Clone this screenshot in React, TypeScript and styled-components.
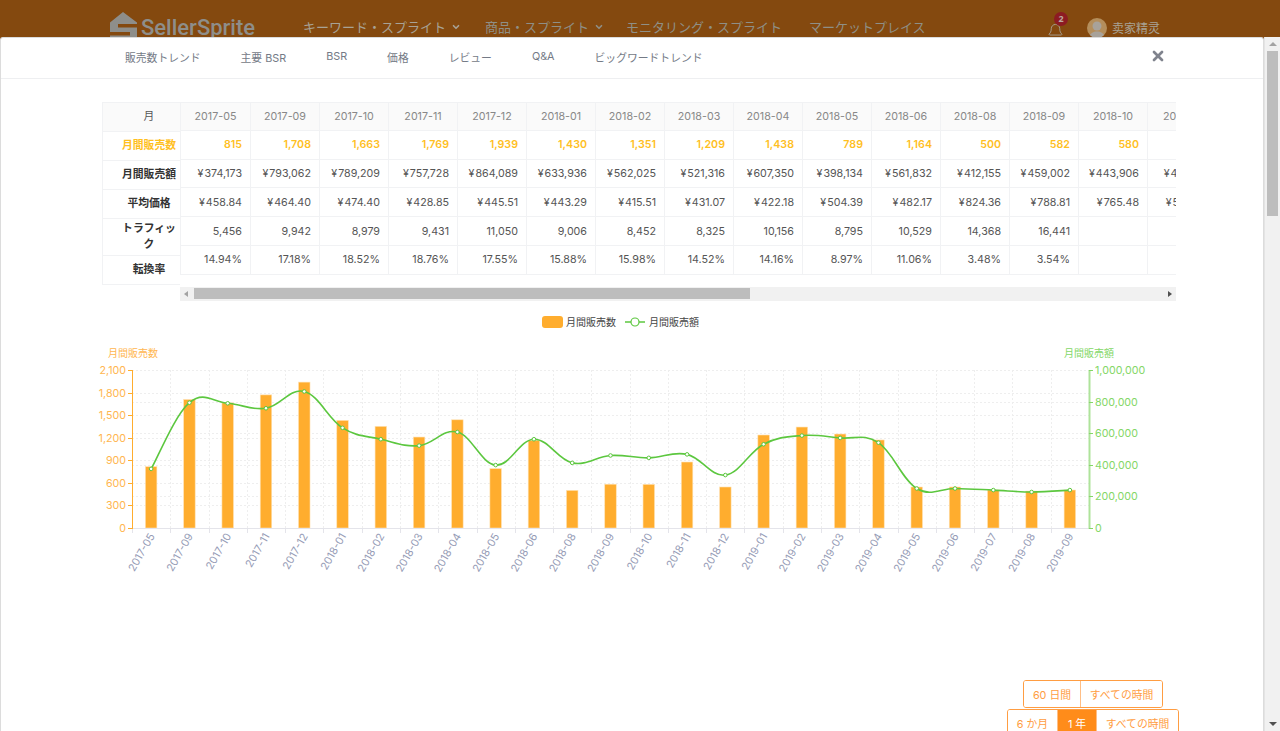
import React from "react";
import styled, { createGlobalStyle } from "styled-components";
import { Bell, ChevronDown, X } from "lucide-react";

const FONT = `Inter, "Noto Sans CJK JP", sans-serif`;

const Global = createGlobalStyle`
  html, body { margin: 0; padding: 0; height: 100%; overflow: hidden; background: #fff; }
  * { box-sizing: border-box; }
  body { font-family: ${FONT}; }
`;

const Page = styled.div`
  height: 731px;
  overflow: hidden;
  display: flex;
  flex-direction: column;
  background: #84490f;
`;
const TopBar = styled.header`
  height: 37px;
  flex: none;
  position: relative;
  overflow: hidden;
  display: flex;
  align-items: flex-start;
  padding: 12px 0 0 110px;
  color: #a8a295;
`;
const LogoText = styled.span`
  font: 500 22px/31px Roboto, sans-serif;
  color: #8e8e8a;
  margin-left: 3px;
  width: 162px;
  flex: none;
`;
const NavItem = styled.span<{ $w: number; $dim?: boolean }>`
  width: ${(p) => p.$w}px;
  flex: none;
  font-size: 13px;
  line-height: 30px;
  display: flex;
  align-items: center;
  gap: 5px;
  white-space: nowrap;
  color: ${(p) => (p.$dim ? "#8f8f86" : "#a8a295")};
`;
const Right = styled.div`
  position: relative;
  flex: none;
  margin-left: 121px;
  display: flex;
  align-items: center;
  height: 30px;
  font-size: 12px;
`;
const Badge = styled.span`
  position: absolute;
  left: 7px;
  top: 0;
  width: 14px;
  height: 14px;
  border-radius: 50%;
  background: #8d1b22;
  color: #b9a9a0;
  font: 700 9px/14px "Open Sans", sans-serif;
  text-align: center;
`;
const Avatar = styled.span`
  width: 20px;
  height: 20px;
  border-radius: 50%;
  background: #b48e5c;
  margin: 1px 5px 0 23px;
  overflow: hidden;
  display: block;
`;
const Main = styled.div`
  flex: 1;
  min-height: 0;
  display: flex;
`;
const Modal = styled.section`
  width: 1264px;
  flex: none;
  background: #fff;
  border: 1px solid #dcdcdc;
  border-bottom: none;
  border-radius: 3px 3px 0 0;
  overflow: hidden;
`;
const PageScroll = styled.div`
  flex: 1;
  background: #f1f1f1;
  border-left: 1px solid #e4e4e4;
  display: flex;
  flex-direction: column;
  align-items: center;
  padding-top: 5px;
  position: relative;
`;
const ArrowUp = styled.i`
  width: 0;
  height: 0;
  border: 4px solid transparent;
  border-top: none;
  border-bottom: 4px solid #a3a3a3;
`;
const ArrowDown = styled.i`
  position: absolute;
  bottom: 5px;
  width: 0;
  height: 0;
  border: 4px solid transparent;
  border-bottom: none;
  border-top: 4px solid #505050;
`;
const PageThumb = styled.div`
  width: 11px;
  height: 165px;
  background: #bdbdbd;
  margin-top: 5px;
`;
const Tabs = styled.nav`
  height: 41px;
  padding: 0 0 3px 124px;
  border-bottom: 1px solid #eeeff1;
  display: flex;
  align-items: center;
  gap: 40px;
  color: #747a86;
  font-size: 10.8px;
  position: relative;
`;
const Close = styled.span`
  position: absolute;
  left: 1149px;
  top: 10px;
  color: #7f838d;
  display: flex;
`;
const Content = styled.div`
  padding: 23px 0 0 101px;
  width: 1175px;
`;
const TableWrap = styled.div`
  display: flex;
  align-items: flex-start;
  height: 203px;
`;
const LeftCol = styled.div`
  width: 78px;
  flex: none;
  border: 1px solid #f1f2f4;
  border-right: none;
`;
const LeftCell = styled.div<{ $h: number; $head?: boolean; $amber?: boolean }>`
  height: ${(p) => p.$h}px;
  display: flex;
  align-items: center;
  justify-content: center;
  text-align: center;
  padding: 0 3px 0 18px;
  font-size: 10.8px;
  line-height: 16px;
  font-weight: ${(p) => (p.$head ? 400 : 700)};
  color: ${(p) => (p.$amber ? "#ffc01f" : p.$head ? "#555" : "#333")};
  background: ${(p) => (p.$head ? "#fafafa" : "#fff")};
  border-bottom: 1px solid #f1f2f4;
  &:last-child { border-bottom: none; }
`;
const Scroller = styled.div`
  flex: 1;
  min-width: 0;
  overflow: hidden;
`;
const Row = styled.div<{ $head?: boolean }>`
  display: flex;
  width: max-content;
  height: 28.8px;
  background: ${(p) => (p.$head ? "#fafafa" : "#fff")};
  border-top: ${(p) => (p.$head ? "1px solid #f1f2f4" : "none")};
  border-bottom: 1px solid #f1f2f4;
`;
const Cell = styled.div<{ $head?: boolean; $amber?: boolean; $first?: boolean }>`
  width: ${(p) => (p.$first ? 70 : 69)}px;
  flex: none;
  border-left: 1px solid #f1f2f4;
  display: flex;
  align-items: center;
  justify-content: ${(p) => (p.$head ? "center" : "flex-end")};
  padding-right: ${(p) => (p.$head ? 0 : 8)}px;
  font-size: 10.7px;
  font-weight: ${(p) => (p.$amber ? 600 : 400)};
  color: ${(p) => (p.$amber ? "#ffc01f" : p.$head ? "#888" : "#555")};
  white-space: nowrap;
`;
const HScroll = styled.div`
  height: 14px;
  margin-top: 12px;
  background: #f1f1f1;
  display: flex;
  align-items: center;
  justify-content: space-between;
  padding: 0 4px;
  position: relative;
`;
const ArrowLeft = styled.i`
  width: 0;
  height: 0;
  border: 3.5px solid transparent;
  border-left: none;
  border-right: 4px solid #a3a3a3;
`;
const ArrowRight = styled.i`
  width: 0;
  height: 0;
  border: 3.5px solid transparent;
  border-right: none;
  border-left: 4px solid #505050;
`;
const HThumb = styled.div`
  position: absolute;
  left: 14px;
  top: 1px;
  width: 556px;
  height: 11px;
  background: #bdbdbd;
`;
const ChartSvg = styled.svg`
  display: block;
  width: 1074px;
  height: 360px;
  overflow: visible;
`;
const AxisText = styled.text<{ $c: string }>`
  font-family: ${FONT};
  font-size: 10.7px;
  fill: ${(p) => p.$c};
`;
const RangeStack = styled.div`
  width: 172px;
  margin: 15px 0 0 905px;
  display: flex;
  flex-direction: column;
  align-items: center;
`;
const RangeGroup = styled.div`
  display: flex;
  height: 28px;
  margin-bottom: 1px;
  border: 1px solid #ff9d42;
  border-radius: 3px;
  overflow: hidden;
  flex: none;
`;
const RangeBtn = styled.div<{ $w: number; $on?: boolean }>`
  width: ${(p) => p.$w}px;
  display: flex;
  align-items: center;
  justify-content: center;
  font-size: 10.8px;
  color: ${(p) => (p.$on ? "#fff" : "#ff9d42")};
  background: ${(p) => (p.$on ? "#ff8c1a" : "#fff")};
  border-left: 1px solid #ffbe85;
  &:first-child { border-left: none; }
`;

const months = ["2017-05","2017-09","2017-10","2017-11","2017-12","2018-01","2018-02","2018-03","2018-04","2018-05","2018-06","2018-08","2018-09","2018-10","2018-11"];
const rows: { amber?: boolean; v: string[] }[] = [
  { amber: true, v: ["815","1,708","1,663","1,769","1,939","1,430","1,351","1,209","1,438","789","1,164","500","582","580",""] },
  { v: ["374,173","793,062","789,209","757,728","864,089","633,936","562,025","521,316","607,350","398,134","561,832","412,155","459,002","443,906","461,122"].map((s) => "¥\u200A" + s) },
  { v: ["458.84","464.40","474.40","428.85","445.51","443.29","415.51","431.07","422.18","504.39","482.17","824.36","788.81","765.48","529.88"].map((s) => "¥\u200A" + s) },
  { v: ["5,456","9,942","8,979","9,431","11,050","9,006","8,452","8,325","10,156","8,795","10,529","14,368","16,441","",""] },
  { v: ["14.94%","17.18%","18.52%","18.76%","17.55%","15.88%","15.98%","14.52%","14.16%","8.97%","11.06%","3.48%","3.54%","",""] },
];

const cats = ["2017-05","2017-09","2017-10","2017-11","2017-12","2018-01","2018-02","2018-03","2018-04","2018-05","2018-06","2018-08","2018-09","2018-10","2018-11","2018-12","2019-01","2019-02","2019-03","2019-04","2019-05","2019-06","2019-07","2019-08","2019-09"];
const sales = [815,1708,1663,1769,1939,1430,1351,1209,1438,789,1164,500,582,580,877,545,1236,1342,1249,1170,545,545,505,490,505];
const money = [374173,793062,789209,757728,864089,633936,562025,521316,607350,398134,561832,412155,459002,443906,466000,335000,530000,585000,570000,540000,250000,250000,240000,228000,240000];

const X0 = 132, X1 = 1089, Y0 = 528, Y1 = 370;
const band = (X1 - X0) / cats.length;
const cx = (i: number) => X0 + band * (i + 0.5);
const yL = (v: number) => Y0 - ((Y0 - Y1) * v) / 2100;
const yR = (v: number) => Y0 - ((Y0 - Y1) * v) / 1000000;
const pts = money.map((m, i) => [cx(i), yR(m)] as const);
const linePath = pts.reduce((d, p, i) => {
  if (i === 0) return `M${p[0]} ${p[1]}`;
  const a = pts[i - 1], b = pts[Math.max(0, i - 2)], c = pts[Math.min(pts.length - 1, i + 1)];
  const k = 0.19;
  const c1x = a[0] + (p[0] - b[0]) * k, c1y = a[1] + (p[1] - b[1]) * k;
  const c2x = p[0] - (c[0] - a[0]) * k, c2y = p[1] - (c[1] - a[1]) * k;
  return `${d}C${c1x} ${c1y} ${c2x} ${c2y} ${p[0]} ${p[1]}`;
}, "");

const ORANGE = "#ffad2e", ORANGE_T = "#ffb650", GREEN = "#5cc73f", GREEN_T = "#84d767";

function Chart() {
  const leftTicks = [0, 300, 600, 900, 1200, 1500, 1800, 2100];
  const rightTicks = [0, 200000, 400000, 600000, 800000, 1000000];
  return (
    <ChartSvg viewBox="102 305 1074 360">
      <rect x={542} y={316} width={21} height={12} rx={3} fill={ORANGE} />
      <AxisText $c="#444" x={566} y={326} style={{ fontSize: 10 }}>月間販売数</AxisText>
      <path d="M625 322H645" stroke={GREEN} strokeWidth={1.5} />
      <circle cx={635} cy={322} r={4} fill="#fff" stroke={GREEN} strokeWidth={1.2} />
      <AxisText $c="#444" x={649} y={326} style={{ fontSize: 10 }}>月間販売額</AxisText>
      <AxisText $c={ORANGE_T} x={108} y={357} style={{ fontSize: 10 }}>月間販売数</AxisText>
      <AxisText $c={GREEN_T} x={1064} y={357} style={{ fontSize: 10 }}>月間販売額</AxisText>
      {leftTicks.slice(1).map((t) => (
        <path key={t} d={`M${X0} ${Math.round(yL(t)) + 0.5}H${X1}`} stroke="#eee" strokeDasharray="2 2" />
      ))}
      {rightTicks.slice(1).map((t) => (
        <path key={t} d={`M${X0} ${Math.round(yR(t)) + 0.5}H${X1}`} stroke="#eee" strokeDasharray="2 2" />
      ))}
      {cats.map((_, i) => (
        <path key={i} d={`M${Math.round(X0 + band * (i + 1)) + 0.5} ${Y1}V${Y0}`} stroke="#eee" strokeDasharray="2 2" />
      ))}
      {sales.map((v, i) => (
        <rect key={i} x={cx(i) - 5.75} y={yL(v)} width={11.5} height={Y0 - yL(v)} fill={ORANGE} stroke="#ffe2b4" strokeWidth={0.6} />
      ))}
      <path d={`M${X0} 528.5H${X1}`} stroke="#e4e4ea" />
      {cats.map((_, i) => (
        <path key={i} d={`M${Math.round(X0 + band * i) + 0.5} 528V533`} stroke="#e4e4ea" />
      ))}
      {cats.map((c, i) => (
        <AxisText key={c + i} $c="#969cb6" textAnchor="end" transform={`translate(${cx(i) + 4} 536) rotate(-60)`}>{c}</AxisText>
      ))}
      <path d={`M132.5 ${Y1}V${Y0 + 1}`} stroke={ORANGE} />
      {leftTicks.map((t) => (
        <g key={t}>
          <path d={`M128 ${Math.round(yL(t)) + 0.5}H132`} stroke={ORANGE} />
          <AxisText $c={ORANGE_T} x={126} y={yL(t) + 4} textAnchor="end">{t.toLocaleString("en-US")}</AxisText>
        </g>
      ))}
      <path d={`M1089.5 ${Y1}V${Y0 + 1}`} stroke="#aee39b" strokeWidth={2} />
      {rightTicks.map((t) => (
        <g key={t}>
          <path d={`M1089 ${Math.round(yR(t)) + 0.5}H1093`} stroke={GREEN_T} />
          <AxisText $c={GREEN_T} x={1095} y={yR(t) + 4}>{t.toLocaleString("en-US")}</AxisText>
        </g>
      ))}
      <path d={linePath} fill="none" stroke={GREEN} strokeWidth={1.6} />
      {pts.map((p, i) => (
        <circle key={i} cx={p[0]} cy={p[1]} r={1.8} fill="#fff" stroke={GREEN} strokeWidth={1} />
      ))}
    </ChartSvg>
  );
}

export default function App() {
  return (
    <Page>
      <Global />
      <TopBar>
        <svg width="28" height="30" viewBox="0 0 28 30" style={{ flex: "none" }}>
          <path fill="#8e8e8a" d="M13 0 L27 10.500 V12 H8 V15.500 H27 V30 H0 V23.500 H20 V20 H0 V10.500 Z" />
        </svg>
        <LogoText>SellerSprite</LogoText>
        <NavItem $w={182}>キーワード・スプライト<ChevronDown size={10} strokeWidth={4} /></NavItem>
        <NavItem $w={141} $dim>商品・スプライト<ChevronDown size={10} strokeWidth={4} /></NavItem>
        <NavItem $w={183} $dim>モニタリング・スプライト</NavItem>
        <NavItem $w={117} $dim>マーケットプレイス</NavItem>
        <Right>
          <Bell size={17} strokeWidth={1.3} style={{ marginTop: 9 }} />
          <Badge>2</Badge>
          <Avatar>
            <svg width="20" height="20" viewBox="0 0 20 20">
              <circle cx="10" cy="8" r="4.5" fill="#a8a29a" />
              <path d="M2 20c1-5 4-6.5 8-6.5s7 1.500 8 6.500Z" fill="#a8a29a" />
            </svg>
          </Avatar>
          <span>卖家精灵</span>
        </Right>
      </TopBar>
      <Main>
        <Modal>
          <Tabs>
            {["販売数トレンド", "主要 BSR", "BSR", "価格", "レビュー", "Q&A", "ビッグワードトレンド"].map((t) => (
              <span key={t}>{t}</span>
            ))}
            <Close><X size={16} strokeWidth={4} /></Close>
          </Tabs>
          <Content>
            <TableWrap>
              <LeftCol>
                <LeftCell $h={29} $head>月</LeftCell>
                <LeftCell $h={29} $amber>月間販売数</LeftCell>
                <LeftCell $h={29}>月間販売額</LeftCell>
                <LeftCell $h={29}>平均価格</LeftCell>
                <LeftCell $h={37}>トラフィック</LeftCell>
                <LeftCell $h={28}>転換率</LeftCell>
              </LeftCol>
              <Scroller>
                <Row $head>
                  {months.map((m, i) => <Cell key={m} $head $first={i === 0}>{m}</Cell>)}
                </Row>
                {rows.map((r, ri) => (
                  <Row key={ri}>
                    {r.v.map((v, i) => <Cell key={i} $amber={r.amber} $first={i === 0}>{v}</Cell>)}
                  </Row>
                ))}
                <HScroll>
                  <ArrowLeft />
                  <HThumb />
                  <ArrowRight />
                </HScroll>
              </Scroller>
            </TableWrap>
            <Chart />
            <RangeStack>
              <RangeGroup>
                <RangeBtn $w={56}>60 日間</RangeBtn>
                <RangeBtn $w={82}>すべての時間</RangeBtn>
              </RangeGroup>
              <RangeGroup>
                <RangeBtn $w={49}>6 か月</RangeBtn>
                <RangeBtn $w={39} $on>1 年</RangeBtn>
                <RangeBtn $w={82}>すべての時間</RangeBtn>
              </RangeGroup>
            </RangeStack>
          </Content>
        </Modal>
        <PageScroll>
          <ArrowUp />
          <PageThumb />
          <ArrowDown />
        </PageScroll>
      </Main>
    </Page>
  );
}
